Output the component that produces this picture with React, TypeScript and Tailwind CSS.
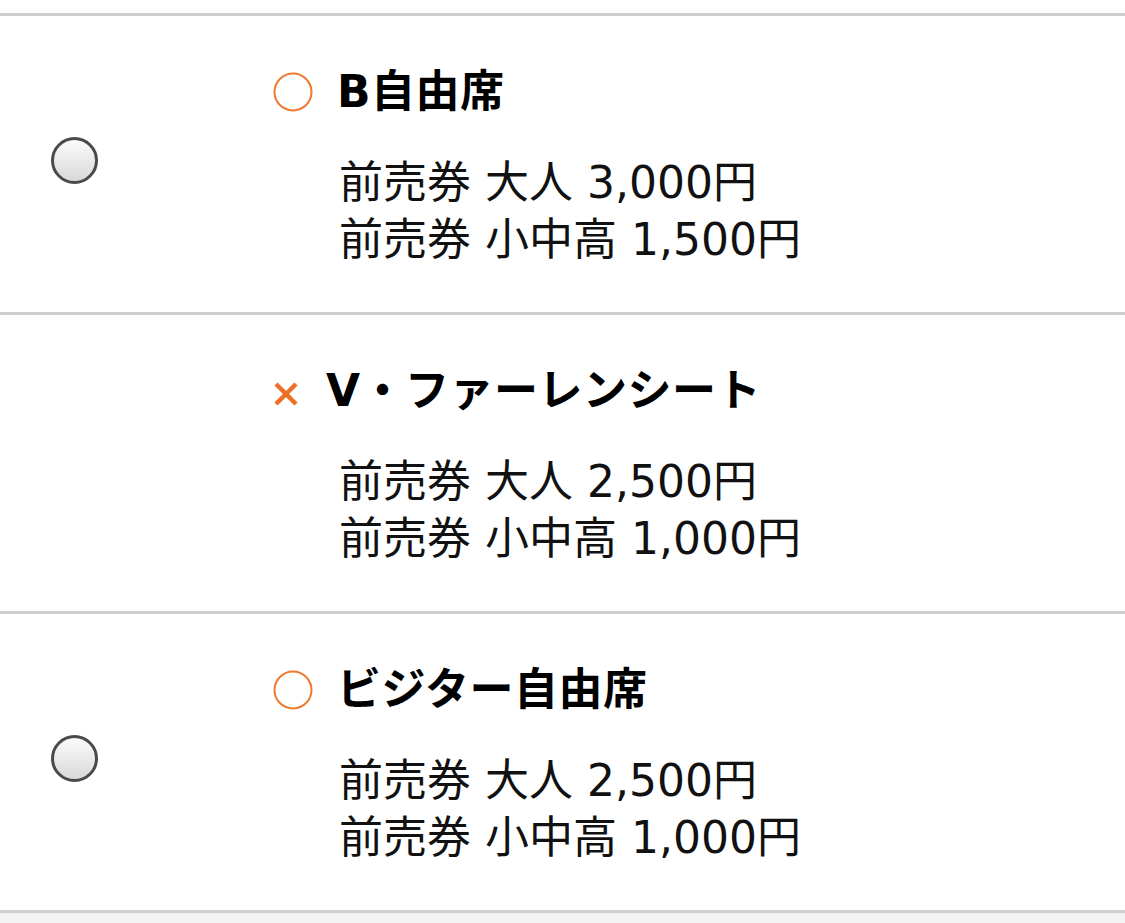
import React from "react";

type Seat = {
  name: string;
  available: boolean;
  adult: string;
  child: string;
};

const seats: Seat[] = [
  { name: "B自由席", available: true, adult: "3,000円", child: "1,500円" },
  { name: "V・ファーレンシート", available: false, adult: "2,500円", child: "1,000円" },
  { name: "ビジター自由席", available: true, adult: "2,500円", child: "1,000円" },
];

const font = { fontFamily: '"DejaVu Sans", "Noto Sans CJK JP", sans-serif' };

const Radio = () => (
  <span className="block w-[47px] h-[47px] rounded-full border-[3px] border-[#4a4a4a] bg-gradient-to-b from-[#fbfbfb] to-[#d9d9d9]" />
);

const Mark = ({ available }: { available: boolean }) =>
  available ? (
    <svg width="40" height="40" viewBox="0 0 40 40" className="shrink-0">
      <circle cx="20" cy="20" r="18.5" fill="none" stroke="#ee7a2f" strokeWidth="2" />
    </svg>
  ) : (
    <svg width="26" height="24" viewBox="0 0 26 24" className="shrink-0 mt-[6px]">
      <path d="M3 2 L23 22 M23 2 L3 22" stroke="#ee6f24" strokeWidth="4.5" />
    </svg>
  );

const SeatRow = ({ seat }: { seat: Seat }) => (
  <div className="flex items-center h-[299px] border-b-[3px] border-[#cfcfcf] bg-white">
    <div className="w-[273px] shrink-0 flex pl-[51px] mb-[7px]">
      {seat.available && <Radio />}
    </div>
    <div className="flex flex-col">
      <div className="flex items-center h-[57px] mt-[3px]">
        <Mark available={seat.available} />
        <span
          className={`${seat.available ? "ml-[24px]" : "ml-[27px]"} text-[44px] font-bold text-black tracking-[0.5px]`}
        >
          {seat.name}
        </span>
      </div>
      <div className="mt-[34px] pl-[66px] text-[44px] leading-[57px] text-[#111]">
        <div>前売券 大人 {seat.adult}</div>
        <div>前売券 小中高 {seat.child}</div>
      </div>
    </div>
  </div>
);

export default function App() {
  return (
    <div className="w-[1125px] h-[923px] bg-[#f3f3f3] overflow-hidden" style={font}>
      <div className="h-[13px] bg-white" />
      <div className="border-t-[3px] border-[#cfcfcf]">
        {seats.map((s) => (
          <SeatRow key={s.name} seat={s} />
        ))}
      </div>
    </div>
  );
}
